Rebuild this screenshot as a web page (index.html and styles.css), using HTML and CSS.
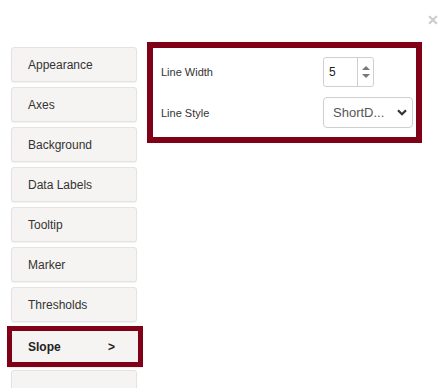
FILE: index.html
```html
<!DOCTYPE html>
<html lang="en">
<head>
  <meta charset="UTF-8">
  <meta name="viewport" content="width=device-width, initial-scale=1.0">
  <title>Chart settings - Slope</title>
  <link rel="stylesheet" href="styles.css">
</head>
<body>

<div class="okno">
  <!-- GÓRA: ZAMKNIĘCIE -->
  <div class="naglowek">
    <span class="zamknij">&#10005;</span>
  </div>

  <div class="uklad">
    <!-- MENU KATEGORII -->
    <div class="menu-boczne">
      <div class="zakladka">Appearance</div>
      <div class="zakladka">Axes</div>
      <div class="zakladka">Background</div>
      <div class="zakladka">Data Labels</div>
      <div class="zakladka">Tooltip</div>
      <div class="zakladka">Marker</div>
      <div class="zakladka">Thresholds</div>
      <div class="zakladka aktywna"><span>Slope</span><span>&gt;</span></div>
      <div class="zakladka"></div>
    </div>

    <!-- PANEL USTAWIEŃ -->
    <div class="panel">
      <div class="etykieta">Line Width</div>
      <div class="liczba">
        <span class="wartosc">5</span>
        <span class="strzalki">
          <span class="strzalka gora"></span>
          <span class="strzalka dol"></span>
        </span>
      </div>
      <div class="etykieta">Line Style</div>
      <div class="lista">
        <span>ShortD...</span>
        <svg width="10" height="7" viewBox="0 0 10 7"><path d="M1 1.2 L5 5.2 L9 1.2" fill="none" stroke="#333" stroke-width="2.2"/></svg>
      </div>
    </div>
  </div>
</div>

</body>
</html>
```

FILE: styles.css
```css
* {
  margin: 0;
  padding: 0;
  box-sizing: border-box;
}
body {
  background: #fff;
  font-family: "Liberation Sans", Arial, sans-serif;
  color: #333;
  overflow: hidden;
}
.okno {
  width: 444px;
  height: 388px;
  overflow: hidden;
}
.naglowek {
  height: 42px;
  display: flex;
  justify-content: flex-end;
  padding: 13px 5px 0 0;
}
.zamknij {
  color: #cacaca;
  font-size: 14px;
  font-weight: bold;
  line-height: 14px;
}
.uklad {
  display: flex;
  align-items: flex-start;
  gap: 10px;
  padding-left: 11px;
}
.menu-boczne {
  display: flex;
  flex-direction: column;
  gap: 5px;
  width: 126px;
  padding-top: 5px;
}
.zakladka {
  height: 35px;
  background: #f5f4f2;
  border: 1px solid #e4e3e1;
  border-radius: 3px;
  box-shadow: 0 1px 1px rgba(0, 0, 0, 0.06);
  font-size: 12px;
  display: flex;
  align-items: center;
  padding-left: 16px;
  flex-shrink: 0;
}
.zakladka.aktywna {
  width: 136px;
  height: 41px;
  margin: -1px 0 -2px -4px;
  border: 5px solid #800018;
  border-radius: 0;
  font-weight: bold;
  justify-content: space-between;
  padding: 0 23px 0 16px;
  color: #222;
}
.panel {
  width: 275px;
  height: 101px;
  border: 6px solid #800018;
  background: #fff;
  display: grid;
  grid-template-columns: 162px 90px;
  grid-template-rows: 30px 31px;
  row-gap: 10px;
  align-items: center;
  padding: 9px 0 0 8px;
}
.etykieta {
  font-size: 11px;
  color: #333;
}
.liczba {
  width: 51px;
  height: 30px;
  border: 1px solid #cfcfcf;
  border-radius: 3px;
  display: flex;
  font-size: 12px;
  color: #222;
}
.wartosc {
  flex: 1;
  display: flex;
  align-items: center;
  padding-left: 5px;
}
.strzalki {
  width: 16px;
  border-left: 1px solid #cfcfcf;
  display: flex;
  flex-direction: column;
  justify-content: space-around;
  align-items: center;
  padding: 6px 0;
}
.strzalka {
  width: 0;
  height: 0;
  border-left: 4px solid transparent;
  border-right: 4px solid transparent;
}
.strzalka.gora {
  border-bottom: 4px solid #777;
}
.strzalka.dol {
  border-top: 4px solid #777;
}
.lista {
  width: 90px;
  height: 31px;
  border: 1px solid #cfcfcf;
  border-radius: 4px;
  display: flex;
  align-items: center;
  justify-content: space-between;
  padding: 0 5px 0 9px;
  font-size: 13px;
  color: #555;
}
```
